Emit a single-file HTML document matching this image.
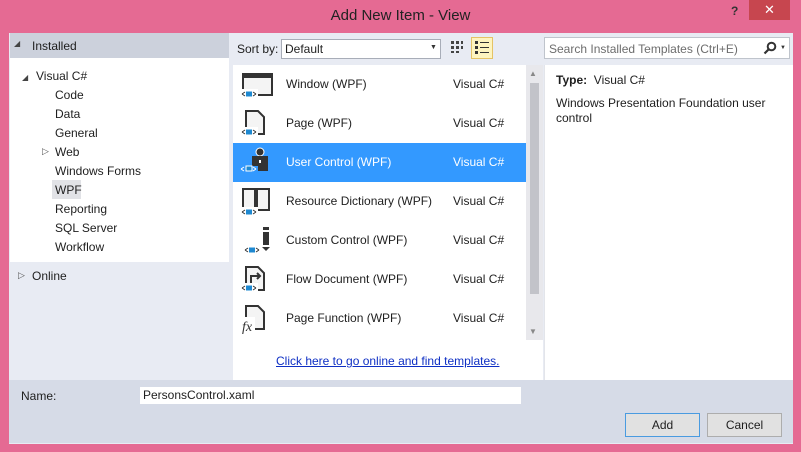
<!DOCTYPE html>
<html><head><style>
*{margin:0;padding:0;box-sizing:border-box}
body{width:801px;height:452px;background:#e56a93;font-family:"Liberation Sans",sans-serif;font-size:12px;color:#1e1e1e;position:relative;overflow:hidden}
.a{position:absolute}
.title{left:0;top:7px;width:801px;text-align:center;font-size:15px;color:#222}
.inner{left:9px;top:33px;width:784px;height:411px;background:#e8ebf3}
.row{position:absolute;left:233px;width:293px;height:39px}
.row .n{position:absolute;left:53px;top:12px}
.row .t{position:absolute;left:220px;top:12px}
.sel{background:#3399ff;color:#fff}
.tree div{position:absolute}
</style></head><body>
<div class="a title">Add New Item - View</div>
<div class="a" style="left:731px;top:4px;font-size:12px;font-weight:bold;color:#333">?</div>
<div class="a" style="left:749px;top:0;width:41px;height:20px;background:#c7464f;color:#fff;text-align:center;font-size:13px;line-height:20px">✕</div>
<div class="a inner"></div>
<!-- left -->
<div class="a" style="left:10px;top:33px;width:219px;height:25px;background:#ccd1dc"></div>
<div class="a" style="left:14px;top:39px;font-size:8px;color:#444">◢</div>
<div class="a" style="left:32px;top:39px">Installed</div>
<div class="a" style="left:10px;top:58px;width:219px;height:204px;background:#fff"></div>
<div class="a" style="left:52px;top:180px;width:29px;height:19px;background:#e1e2e6"></div>
<div class="tree">
<div style="left:22px;top:73px;font-size:8px;color:#444">◢</div>
<div style="left:36px;top:69px">Visual C#</div>
<div style="left:55px;top:88px">Code</div>
<div style="left:55px;top:107px">Data</div>
<div style="left:55px;top:126px">General</div>
<div style="left:42px;top:146px;font-size:9px;color:#555">▷</div>
<div style="left:55px;top:145px">Web</div>
<div style="left:55px;top:164px">Windows Forms</div>
<div style="left:55px;top:183px">WPF</div>
<div style="left:55px;top:202px">Reporting</div>
<div style="left:55px;top:221px">SQL Server</div>
<div style="left:55px;top:240px">Workflow</div>
<div style="left:18px;top:270px;font-size:9px;color:#555">▷</div>
<div style="left:32px;top:269px">Online</div>
</div>
<!-- toolbar -->
<div class="a" style="left:237px;top:42px">Sort by:</div>
<div class="a" style="left:281px;top:39px;width:160px;height:20px;background:#fff;border:1px solid #a8adb8;padding:2px 3px">Default</div>
<div class="a" style="left:430px;top:44px;font-size:7px;color:#333">▼</div>
<svg class="a" style="left:450px;top:40px" width="14" height="14"><g fill="#444"><rect x="1" y="1" width="3" height="3"/><rect x="6" y="1" width="3" height="3"/><rect x="11" y="1" width="2" height="3"/><rect x="1" y="6" width="3" height="3"/><rect x="6" y="6" width="3" height="3"/><rect x="11" y="6" width="2" height="3"/><rect x="1" y="11" width="3" height="2"/><rect x="6" y="11" width="3" height="2"/></g></svg>
<div class="a" style="left:471px;top:37px;width:22px;height:22px;background:#fdf4bf;border:1px solid #e5c365"></div>
<svg class="a" style="left:475px;top:41px" width="14" height="14"><g fill="#333"><rect x="0" y="0" width="3" height="3"/><rect x="0" y="5" width="3" height="3"/><rect x="0" y="10" width="3" height="3"/><rect x="5" y="1" width="9" height="1"/><rect x="5" y="6" width="9" height="1"/><rect x="5" y="11" width="9" height="1"/></g></svg>
<div class="a" style="left:544px;top:37px;width:246px;height:22px;background:#fff;border:1px solid #bfc4cc;color:#6d6d6d;padding:4px 4px">Search Installed Templates (Ctrl+E)</div>
<svg class="a" style="left:763px;top:41px" width="14" height="14"><circle cx="8.5" cy="5.5" r="3.8" fill="none" stroke="#333" stroke-width="2"/><path d="M6 8 L1.5 12.5" stroke="#333" stroke-width="2.2"/></svg>
<div class="a" style="left:780px;top:45px;font-size:6px;color:#333">▼</div>
<!-- list -->
<div class="a" style="left:233px;top:65px;width:310px;height:315px;background:#fff"></div>
<div class="a" style="left:526px;top:65px;width:17px;height:275px;background:#e8e8ec"></div>
<div class="a" style="left:530px;top:83px;width:9px;height:211px;background:#c2c3c9"></div>
<div class="a" style="left:529px;top:69px;font-size:8px;color:#888">▲</div>
<div class="a" style="left:529px;top:327px;font-size:8px;color:#888">▼</div>
<div class="row" style="top:65px"><div class="n">Window (WPF)</div><div class="t">Visual C#</div></div>
<div class="row" style="top:104px"><div class="n">Page (WPF)</div><div class="t">Visual C#</div></div>
<div class="row sel" style="top:143px"><div class="n">User Control (WPF)</div><div class="t">Visual C#</div></div>
<div class="row" style="top:182px"><div class="n">Resource Dictionary (WPF)</div><div class="t">Visual C#</div></div>
<div class="row" style="top:221px"><div class="n">Custom Control (WPF)</div><div class="t">Visual C#</div></div>
<div class="row" style="top:260px"><div class="n">Flow Document (WPF)</div><div class="t">Visual C#</div></div>
<div class="row" style="top:299px"><div class="n">Page Function (WPF)</div><div class="t">Visual C#</div></div>
<svg class="a" style="left:238px;top:65px" width="40" height="273">
<defs><g id="b"><path d="M1 3 L4 1 M1 3 L4 5" stroke="#333" fill="none"/><rect x="5" y="0.5" width="6" height="5" fill="#1e88d0"/><path d="M15 3 L12 1 M15 3 L12 5" stroke="#333" fill="none"/></g></defs>
<rect x="5" y="9" width="29" height="21" fill="#f4f4f4" stroke="#333" stroke-width="2"/><rect x="4" y="8" width="31" height="5" fill="#333"/>
<rect x="2" y="24" width="18" height="10" fill="#fff"/><use href="#b" x="3" y="26"/>
<path d="M8 46 L20 46 L26 52 L26 69 L8 69 Z" fill="#f4f4f4" stroke="#333" stroke-width="2"/>
<rect x="2" y="62" width="18" height="10" fill="#fff"/><use href="#b" x="3" y="64"/>
<circle cx="22" cy="87" r="4" fill="#333" stroke="#fff"/><rect x="14" y="91" width="16" height="15" fill="#333"/><rect x="21" y="95" width="2" height="3" fill="#fff"/>
<rect x="2" y="101" width="18" height="10" fill="#3399ff"/><path d="M3 104 L6 102 M3 104 L6 106" stroke="#fff" fill="none"/><rect x="8" y="101" width="6" height="5" fill="#1e88d0" stroke="#fff"/><path d="M18 104 L15 102 M18 104 L15 106" stroke="#fff" fill="none"/>
<path d="M5 124 L17 124 L17 145 L5 145 Z M19 124 L31 124 L31 145 L19 145 Z" fill="#f4f4f4" stroke="#333" stroke-width="2"/>
<rect x="2" y="142" width="18" height="10" fill="#fff"/><use href="#b" x="3" y="144"/>
<rect x="25" y="162" width="6" height="3" fill="#333"/><rect x="25" y="167" width="6" height="13" fill="#333"/><path d="M24 182 L32 182 L28 186Z" fill="#333"/>
<use href="#b" x="6" y="182"/>
<path d="M8 202 L20 202 L26 208 L26 225 L8 225 Z" fill="#f4f4f4" stroke="#333" stroke-width="2"/><path d="M13 218 L13 211 L21 211 M19 208 L22 211 L19 214" stroke="#333" stroke-width="2" fill="none"/>
<rect x="2" y="218" width="18" height="10" fill="#fff"/><use href="#b" x="3" y="220"/>
<path d="M8 241 L20 241 L26 247 L26 264 L8 264 Z" fill="#f4f4f4" stroke="#333" stroke-width="2"/>
<rect x="3" y="252" width="14" height="14" fill="#fff"/><text x="4" y="266" font-family="Liberation Serif" font-style="italic" font-size="14" fill="#333">fx</text>
</svg>
<div class="a" style="left:276px;top:354px;text-decoration:underline;color:#0e2fc4">Click here to go online and find templates.</div>
<!-- details -->
<div class="a" style="left:544px;top:65px;width:249px;height:315px;background:#fff;border-left:1px solid #e3e5ea"></div>
<div class="a" style="left:556px;top:73px"><b>Type:</b>&nbsp; Visual C#</div>
<div class="a" style="left:556px;top:96px;width:230px;line-height:15px">Windows Presentation Foundation user control</div>
<!-- bottom -->
<div class="a" style="left:9px;top:380px;width:784px;height:63px;background:#d6dbe7"></div>
<div class="a" style="left:21px;top:389px">Name:</div>
<div class="a" style="left:140px;top:387px;width:381px;height:17px;background:#fff;padding:1px 3px">PersonsControl.xaml</div>
<div class="a" style="left:625px;top:413px;width:75px;height:24px;border:1px solid #4a9be0;background:#e1e1e1;text-align:center;line-height:22px">Add</div>
<div class="a" style="left:707px;top:413px;width:75px;height:24px;border:1px solid #adadad;background:#e1e1e1;text-align:center;line-height:22px">Cancel</div>
</body></html>
